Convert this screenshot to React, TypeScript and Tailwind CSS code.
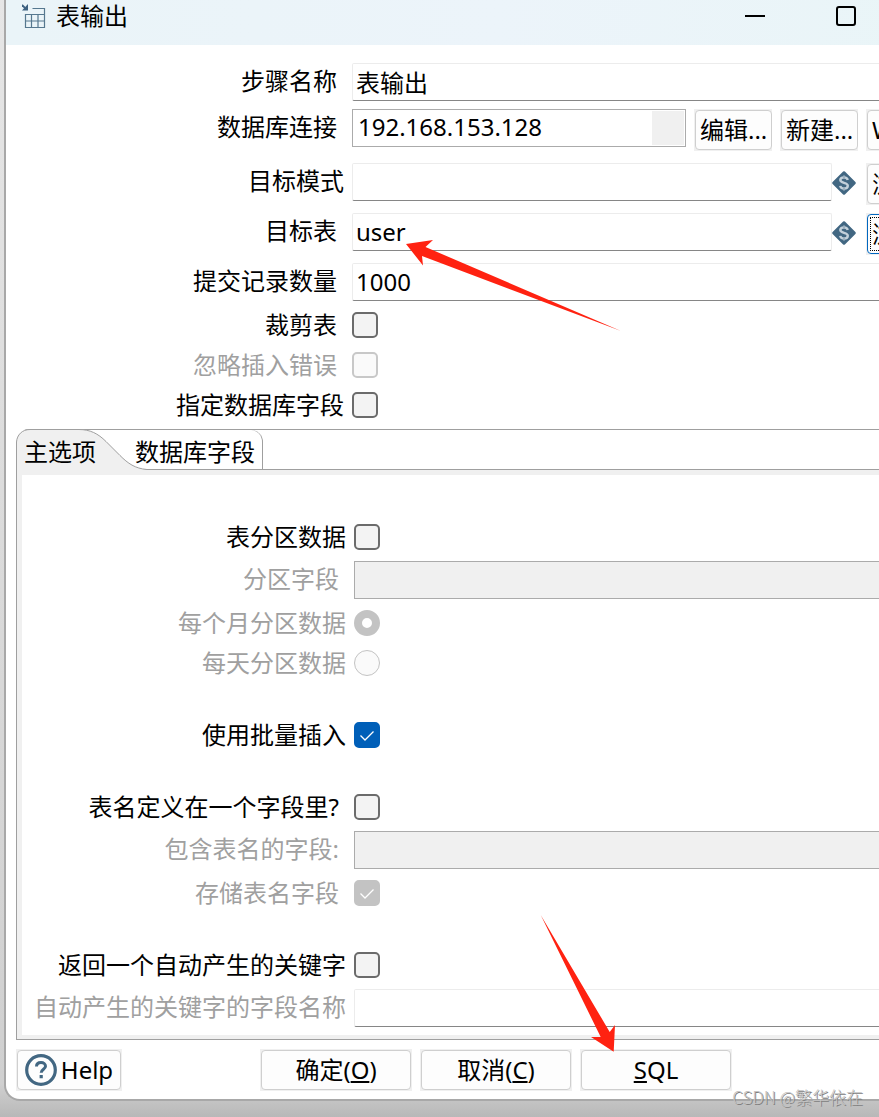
import { useId, useState } from "react";
import type { PropsWithChildren, ReactNode } from "react";
import clsx from "clsx";

function TableOutputIcon() {
  return (
    <svg viewBox="0 0 24 24" className="size-6 shrink-0" fill="none" stroke="#56788f" aria-hidden="true">
      <path d="M10.500 4.500h12v19h-19V10.500h19M3.500 17h19M9.500 10.500v13M16 10.500v13" strokeWidth="1.200" />
      <path d="M0 1l4 4" stroke="#3d6180" strokeWidth="1.800" />
      <path d="M6 0v6.500H0z" fill="#3d6180" stroke="none" />
    </svg>
  );
}

function VariableIcon() {
  return (
    <svg viewBox="0 0 24 24" className="mt-2 size-6 shrink-0" aria-hidden="true">
      <path
        d="M12 1.500L22.500 12 12 22.500 1.500 12z"
        fill="#426782"
        stroke="#426782"
        strokeWidth="2.500"
        strokeLinejoin="round"
      />
      <path
        d="M15.700 9c-.3-1.700-1.700-2.600-3.700-2.600s-3.700.9-3.700 2.700c0 3.600 7.500 2.100 7.500 5.700 0 1.900-1.600 2.800-3.800 2.800s-3.500-1-3.800-2.700"
        fill="none"
        stroke="#c3d0da"
        strokeWidth="2.400"
      />
      <path d="M12 4.500v3M12 16.500v3" stroke="#9fb2c0" strokeWidth="2" />
    </svg>
  );
}

function HelpIcon() {
  return (
    <svg viewBox="0 0 32 32" className="size-8 shrink-0" fill="none" stroke="#426782" aria-hidden="true">
      <circle cx="16" cy="16" r="14.300" strokeWidth="3.200" />
      <path d="M11.500 12.500c0-2.500 1.900-4 4.500-4s4.500 1.500 4.500 3.800c0 3-4.300 3-4.300 6.500" strokeWidth="3" />
      <path d="M16.200 21v3.200" strokeWidth="3.200" />
    </svg>
  );
}

function Row({
  label,
  htmlFor,
  className,
  indent,
  disabled,
  children,
}: PropsWithChildren<{
  label: string;
  htmlFor: string;
  className: string;
  indent?: boolean;
  disabled?: boolean;
}>) {
  return (
    <div className={clsx("flex items-start", className)}>
      <label
        htmlFor={htmlFor}
        className={clsx(
          "w-[346px] shrink-0 text-right leading-9 group-data-[panel]:w-[332px]",
          indent ? "pr-[15px]" : "pr-2",
          disabled && "text-[#a0a0a0]",
        )}
      >
        {label}
      </label>
      {children}
    </div>
  );
}

function TextRow({
  label,
  value = "",
  className,
  indent,
  disabled,
  filled,
  children,
}: {
  label: string;
  value?: string;
  className: string;
  indent?: boolean;
  disabled?: boolean;
  filled?: boolean;
  children?: ReactNode;
}) {
  const id = useId();
  return (
    <Row label={label} htmlFor={id} className={className} indent={indent} disabled={disabled}>
      <input
        id={id}
        type="text"
        defaultValue={value}
        disabled={disabled}
        className={clsx(
          "h-[38px] min-w-0 flex-1 border px-[3px] pb-0.5 outline-none",
          filled
            ? "border-[#ababab] bg-[#f0f0f0]"
            : "rounded-xs border-[#ececec] border-b-[#868686] bg-white",
        )}
      />
      {children}
    </Row>
  );
}

function CheckRow({
  label,
  className = "h-10",
  checked,
  indent,
  disabled,
}: {
  label: string;
  className?: string;
  checked?: boolean;
  indent?: boolean;
  disabled?: boolean;
}) {
  const id = useId();
  return (
    <Row label={label} htmlFor={id} className={className} indent={indent} disabled={disabled}>
      <span className="relative mt-[5px] size-[26px]">
        <input
          id={id}
          type="checkbox"
          defaultChecked={checked}
          disabled={disabled}
          className="peer block size-[26px] appearance-none rounded-[5px] border-2 border-[#6b6b6b] bg-[#f3f3f3] checked:border-[#005fb8] checked:bg-[#005fb8] disabled:border-[#c8c8c8] disabled:bg-[#fafafa] disabled:checked:border-[#c3c3c3] disabled:checked:bg-[#c3c3c3]"
        />
        <svg
          viewBox="0 0 26 26"
          className="pointer-events-none absolute inset-0 hidden size-[26px] peer-checked:block"
          fill="none"
          stroke="#fff"
          strokeWidth="1.300"
          aria-hidden="true"
        >
          <path d="M6.500 13.500l4.500 4.500 8.500-8.500" />
        </svg>
      </span>
    </Row>
  );
}

function RadioRow({ label, checked }: { label: string; checked?: boolean }) {
  const id = useId();
  return (
    <Row label={label} htmlFor={id} className="h-10" disabled>
      <input
        id={id}
        type="radio"
        name="partition"
        defaultChecked={checked}
        disabled
        className="mt-[5px] size-[26px] appearance-none rounded-full border border-[#c3c3c3] bg-[#fafafa] checked:border-8 checked:bg-white"
      />
    </Row>
  );
}

function PushButton({
  className,
  focused,
  alignLeft,
  children,
}: PropsWithChildren<{ className?: string; focused?: boolean; alignLeft?: boolean }>) {
  return (
    <span className={clsx("flex h-[42px] shrink-0 bg-[#f0f0f0] p-px", className)}>
      <button
        type="button"
        className={clsx(
          "flex flex-1 items-center gap-1 rounded-sm border bg-[#fdfdfd] px-1 whitespace-nowrap",
          alignLeft ? "justify-start" : "justify-center",
          focused ? "border-[#0067c0] outline-1 -outline-offset-4 outline-dotted outline-black" : "border-[#cfcfcf]",
        )}
      >
        {children}
      </button>
    </span>
  );
}

function Tabs() {
  const [tab, setTab] = useState(0);
  return (
    <div role="tablist" className="relative flex h-[41px] border-y border-[#9f9f9f]">
      {/* curved edge of the front tab, drawn over both border lines */}
      <svg
        viewBox="0 0 132 41"
        className="absolute -top-px left-0 h-[41px] w-[132px]"
        fill="none"
        aria-hidden="true"
      >
        <path d="M0 0h12C5 1 1 5 0 12z" fill="#fff" />
        <path
          d="M.5 41V13C1 6 6 .5 14 .5h49c11 0 19 4 27 12l14 14c8 8 15 13 27 14V41z"
          fill="#f0f0f0"
        />
        <path d="M.5 41V13C1 6 6 .5 14 .5h49c11 0 19 4 27 12l14 14c8 8 15 13 27 14" stroke="#9f9f9f" />
      </svg>
      <button
        type="button"
        role="tab"
        aria-selected={tab === 0}
        onClick={() => setTab(0)}
        className="relative w-[119px] pt-1 pl-2 text-left leading-9"
      >
        主选项
      </button>
      <button
        type="button"
        role="tab"
        aria-selected={tab === 1}
        onClick={() => setTab(1)}
        className="relative w-32 rounded-tr-xl border-r border-[#9f9f9f] pt-1 text-left leading-9"
      >
        数据库字段
      </button>
    </div>
  );
}

function TitleBar() {
  return (
    <header className="flex h-[45px] items-start bg-linear-to-r from-[#eaf4f8] via-[#ecf4fa] to-[#e9f5f7] pl-4">
      <div className="flex flex-1 items-center gap-[10px]">
        <TableOutputIcon />
        <h1 className="leading-8">表输出</h1>
      </div>
      <button type="button" aria-label="最小化" className="flex h-8 w-[91px] items-center justify-center">
        <span className="h-0.5 w-5 bg-black" />
      </button>
      <button type="button" aria-label="最大化" className="flex h-8 w-[91px] items-center justify-center">
        <span className="size-5 rounded-[3px] border-2 border-black" />
      </button>
      <span className="w-[92px]" />
    </header>
  );
}

export default function App() {
  return (
    <div className="relative overflow-hidden bg-linear-to-b from-[#e6e6e6] via-[#d0d0d0] via-97% to-[#b8b8b8] pb-4 pl-1 font-['Noto_Sans','Noto_Sans_CJK_SC',sans-serif] text-2xl text-black">
      {/* the dialog runs past the right edge of the viewport */}
      <main className="-mr-[104px] overflow-hidden rounded-bl-2xl border-b-2 border-l-2 border-[#a8a8a8] bg-white">
        <TitleBar />

        <form className="pt-[18px]">
          <TextRow label="步骤名称" value="表输出" className="h-[46px]" indent />
          <Row label="数据库连接" htmlFor="connection" className="h-[54px]" indent>
            <div className="flex h-[38px] min-w-0 flex-1 border border-[#ababab] p-px">
              <select
                id="connection"
                className="min-w-0 flex-1 appearance-none bg-white pb-0.5 pl-1 leading-8 outline-none"
              >
                <option>192.168.153.128</option>
              </select>
              <span className="w-8 bg-[#f0f0f0]" />
            </div>
            <PushButton className="ml-2 w-[78px]">编辑...</PushButton>
            <PushButton className="ml-2 w-[78px]">新建...</PushButton>
            <PushButton className="ml-2 w-[117px]" alignLeft>
              Wizard...
            </PushButton>
          </Row>
          <TextRow label="目标模式" className="h-[50px]">
            <VariableIcon />
            <PushButton className="ml-[10px] w-[117px]" alignLeft>
              浏览(B)...
            </PushButton>
          </TextRow>
          <TextRow label="目标表" value="user" className="h-[50px]" indent>
            <VariableIcon />
            <PushButton className="ml-[10px] w-[117px]" alignLeft focused>
              浏览(B)...
            </PushButton>
          </TextRow>
          <TextRow label="提交记录数量" value="1000" className="h-11" indent />
          <CheckRow label="裁剪表" indent />
          <CheckRow label="忽略插入错误" indent disabled />
          <CheckRow label="指定数据库字段" className="h-[42px]" />

          <section className="ml-[10px]">
            <Tabs />
            <div
              data-panel
              className="group border-b border-l border-[#9f9f9f] bg-[#f0f0f0] pt-[5px] pb-1 pl-[5px]"
            >
              <div className="bg-white pt-11 pb-2">
                <CheckRow label="表分区数据" className="h-[42px]" />
                <TextRow label="分区字段" className="h-11" indent disabled filled />
                <RadioRow label="每个月分区数据" checked />
                <RadioRow label="每天分区数据" />
                <CheckRow label="使用批量插入" className="mt-8 h-10" checked />
                <CheckRow label="表名定义在一个字段里?" className="mt-8 h-[42px]" indent />
                <TextRow label="包含表名的字段:" className="h-11" indent disabled filled />
                <CheckRow label="存储表名字段" indent disabled checked />
                <CheckRow label="返回一个自动产生的关键字" className="mt-8 h-[42px]" />
                <TextRow label="自动产生的关键字的字段名称" className="h-[38px]" disabled />
              </div>
            </div>
          </section>

          <footer className="mt-[9px] mb-2 ml-[10px] flex gap-2">
            <PushButton className="mr-[130px] w-[106px]">
              <HelpIcon />
              Help
            </PushButton>
            <PushButton className="w-[152px]">
              <span>
                确定(<u>O</u>)
              </span>
            </PushButton>
            <PushButton className="w-[152px]">
              <span>
                取消(<u>C</u>)
              </span>
            </PushButton>
            <PushButton className="w-[152px]">
              <span>
                <u>S</u>QL
              </span>
            </PushButton>
          </footer>
        </form>
      </main>

      <svg
        viewBox="0 0 216 92"
        className="pointer-events-none absolute top-[240px] left-[406px] h-[92px] w-[216px]"
        aria-hidden="true"
      >
        <path d="M0 4L27 0l-7.500 7L215 91 16 16l1 9.500z" fill="#ff2211" />
      </svg>
      <svg
        viewBox="0 0 76 138"
        className="pointer-events-none absolute top-[914px] left-[540px] h-[138px] w-[76px]"
        aria-hidden="true"
      >
        <path d="M73.700 137.700L75 111l-5.300 7L.7 1l60 122H51z" fill="#ff2211" />
      </svg>

      <p className="absolute right-4 bottom-2 font-['Noto_Sans_CJK_SC',sans-serif] text-[17px] leading-6 font-light text-[#c4c4c4] [text-shadow:1px_1px_0_#808080]">
        CSDN @繁华依在
      </p>
    </div>
  );
}
